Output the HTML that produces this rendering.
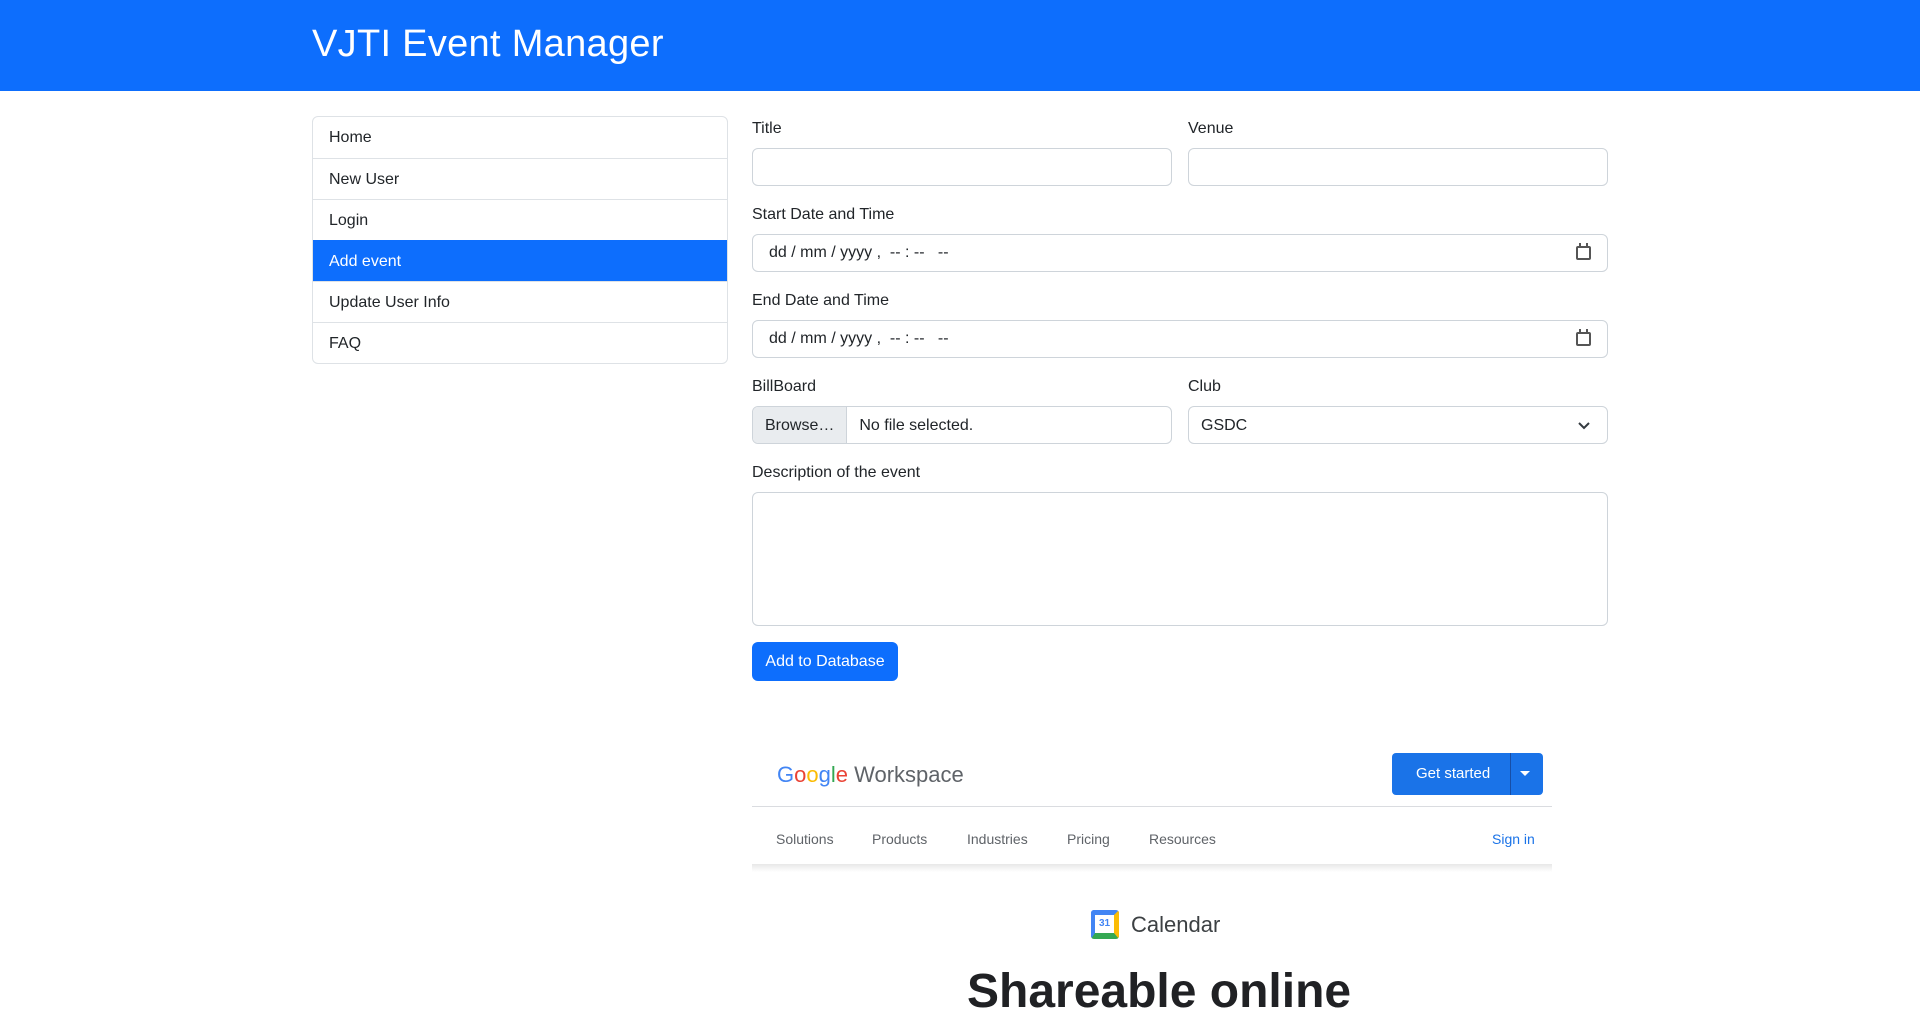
<!DOCTYPE html>
<html><head><meta charset="utf-8"><style>
*{box-sizing:border-box;margin:0;padding:0}
body{width:1920px;height:994px;overflow:hidden;background:#fff;font-family:"Liberation Sans",sans-serif;color:#212529;font-size:16px}
.hdr{height:91px;background:#0d6efd;color:#fff}
.hdr h1{position:absolute;left:312px;top:23px;font-weight:400;font-size:38px;letter-spacing:0.3px}
.list{position:absolute;left:312px;top:116px;width:416px;border:1px solid #dee2e6;border-radius:6px;overflow:hidden}
.list div{height:41px;line-height:42px;padding-left:16px;border-top:1px solid #dee2e6}
.list div:first-child{border-top:none}
.list .act{background:#0d6efd;color:#fff;border-color:#0d6efd}
.lbl{position:absolute;font-size:16px}
.inp{position:absolute;height:38px;border:1px solid #ced4da;border-radius:6px;background:#fff}
.dt{padding-left:16px;line-height:36px;font-size:16px}
.cal{position:absolute;right:16px;top:11px;width:15px;height:14px;border:2px solid #555;border-radius:2px}
.cal:before,.cal:after{content:"";position:absolute;top:-5px;width:2px;height:4px;background:#555}
.cal:before{left:1px}.cal:after{right:1px}
.btn{position:absolute;left:752px;top:642px;width:146px;height:39px;background:#0d6efd;color:#fff;border-radius:6px;text-align:center;line-height:39px;font-size:16px}
.g{font-family:"Liberation Sans",sans-serif}
</style></head><body>
<div class="hdr"><h1>VJTI Event Manager</h1></div>
<div class="list">
<div>Home</div><div>New User</div><div>Login</div><div class="act">Add event</div><div>Update User Info</div><div>FAQ</div>
</div>

<div class="lbl" style="left:752px;top:120px">Title</div>
<div class="lbl" style="left:1188px;top:120px">Venue</div>
<div class="inp" style="left:752px;top:148px;width:420px"></div>
<div class="inp" style="left:1188px;top:148px;width:420px"></div>

<div class="lbl" style="left:752px;top:206px">Start Date and Time</div>
<div class="inp dt" style="left:752px;top:234px;width:856px">dd / mm / yyyy ,&nbsp; -- : --&nbsp;&nbsp; --<span class="cal"></span></div>

<div class="lbl" style="left:752px;top:292px">End Date and Time</div>
<div class="inp dt" style="left:752px;top:320px;width:856px">dd / mm / yyyy ,&nbsp; -- : --&nbsp;&nbsp; --<span class="cal"></span></div>

<div class="lbl" style="left:752px;top:378px">BillBoard</div>
<div class="lbl" style="left:1188px;top:378px">Club</div>
<div class="inp" style="left:752px;top:406px;width:420px;overflow:hidden;line-height:38px"><span style="display:inline-block;background:#e9ecef;border-right:1px solid #ced4da;padding:0 12px;height:36px">Browse…</span><span style="padding-left:12px">No file selected.</span></div>
<div class="inp" style="left:1188px;top:406px;width:420px;line-height:38px;padding-left:12px">GSDC
<svg style="position:absolute;right:16px;top:13px" width="14" height="10" viewBox="0 0 14 10"><path d="M2 3l5 5 5-5" stroke="#343a40" stroke-width="2" fill="none"/></svg></div>

<div class="lbl" style="left:752px;top:464px">Description of the event</div>
<div class="inp" style="left:752px;top:492px;width:856px;height:134px"></div>

<div class="btn">Add to Database</div>

<div class="g" style="position:absolute;left:777px;top:762px;font-size:22px;color:#5f6368"><span style="color:#4285f4">G</span><span style="color:#ea4335">o</span><span style="color:#fbbc05">o</span><span style="color:#4285f4">g</span><span style="color:#34a853">l</span><span style="color:#ea4335">e</span> Workspace</div>
<div style="position:absolute;left:1392px;top:753px;width:151px;height:42px;background:#1a73e8;border-radius:4px;color:#fff;font-size:15px;line-height:42px">
<span style="position:absolute;left:24px">Get started</span>
<span style="position:absolute;left:118px;top:0;width:1px;height:42px;background:#174ea6"></span>
<span style="position:absolute;left:128px;top:18px;border:5px solid transparent;border-top:5px solid #fff;border-bottom:none"></span></div>
<div style="position:absolute;left:752px;top:806px;width:800px;height:1px;background:#dadce0"></div>
<div style="position:absolute;left:776px;top:831px;font-size:14px;color:#5f6368;word-spacing:0">
<span style="position:absolute;left:0">Solutions</span><span style="position:absolute;left:96px">Products</span><span style="position:absolute;left:191px">Industries</span><span style="position:absolute;left:291px">Pricing</span><span style="position:absolute;left:373px">Resources</span></div>
<div style="position:absolute;left:1492px;top:831px;font-size:14px;color:#1a73e8">Sign in</div>
<div style="position:absolute;left:752px;top:864px;width:800px;height:8px;background:linear-gradient(#e8e8e8,#fff)"></div>
<div style="position:absolute;left:1091px;top:910px;width:28px;height:29px;border-radius:3px;background:#fff;border-top:5px solid #4285f4;border-left:4px solid #4285f4;border-right:5px solid #fbbc05;border-bottom:6px solid #34a853;font-size:10px;color:#4285f4;text-align:center;line-height:17px;font-weight:bold">31</div>
<div style="position:absolute;left:1131px;top:912px;font-size:22px;color:#3c4043">Calendar</div>
<div style="position:absolute;left:967px;top:964px;font-size:48px;font-weight:bold;color:#202124">Shareable online</div>
</body></html>
